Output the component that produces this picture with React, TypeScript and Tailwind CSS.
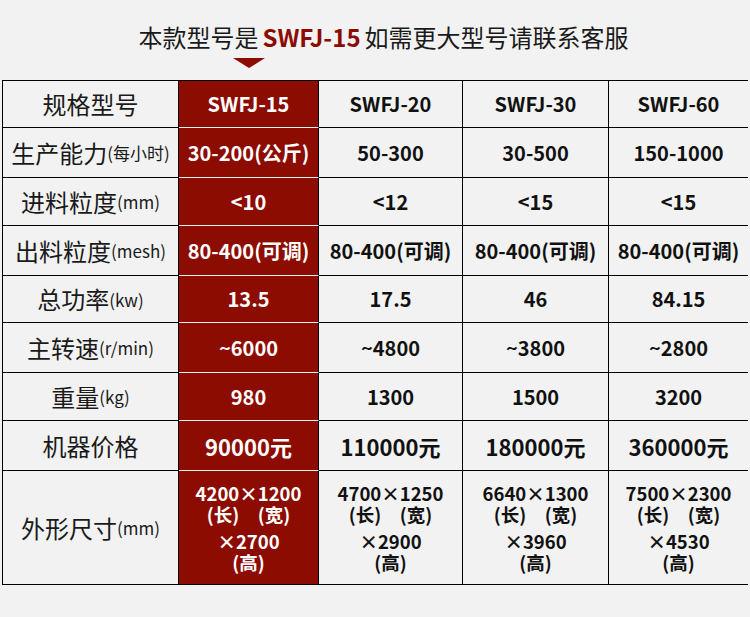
import React from "react";

const RED = "bg-[#8c0c02]";

type Row = {
  label: string;
  unit?: string;
  values: string[];
  h: string;
  kind?: "head" | "price" | "dim";
};

const rows: Row[] = [
  { label: "规格型号", values: ["SWFJ-15", "SWFJ-20", "SWFJ-30", "SWFJ-60"], h: "h-[47px]", kind: "head" },
  { label: "生产能力", unit: "(每小时)", values: ["30-200(公斤)", "50-300", "30-500", "150-1000"], h: "h-[50px]" },
  { label: "进料粒度", unit: "(mm)", values: ["<10", "<12", "<15", "<15"], h: "h-[48px]" },
  { label: "出料粒度", unit: "(mesh)", values: ["80-400(可调)", "80-400(可调)", "80-400(可调)", "80-400(可调)"], h: "h-[50px]" },
  { label: "总功率", unit: "(kw)", values: ["13.5", "17.5", "46", "84.15"], h: "h-[47px]" },
  { label: "主转速", unit: "(r/min)", values: ["~6000", "~4800", "~3800", "~2800"], h: "h-[50px]" },
  { label: "重量", unit: "(kg)", values: ["980", "1300", "1500", "3200"], h: "h-[48px]" },
  { label: "机器价格", values: ["90000元", "110000元", "180000元", "360000元"], h: "h-[50px]", kind: "price" },
  { label: "外形尺寸", unit: "(mm)", values: ["4200×1200|×2700", "4700×1250|×2900", "6640×1300|×3960", "7500×2300|×4530"], h: "h-[114px]", kind: "dim" },
];

function Value({ v, kind }: { v: string; kind?: Row["kind"] }) {
  if (kind === "dim") {
    const [a, b] = v.split("|");
    return (
      <div className="flex flex-col items-center gap-[6px] text-[18.5px] font-bold">
        <div className="flex flex-col items-center">
          <span className="h-[21px] leading-[21px]">{a}</span>
          <span className="h-[21px] leading-[21px]">(长)　(宽)</span>
        </div>
        <div className="flex flex-col items-center">
          <span className="h-[21px] leading-[21px]">{b}</span>
          <span className="h-[21px] leading-[21px]">(高)</span>
        </div>
      </div>
    );
  }
  return (
    <span className={kind === "price" ? "text-[22px] font-bold leading-none" : "text-[20px] font-bold leading-none"}>{v}</span>
  );
}

export default function App() {
  return (
    <div
      className="w-[750px] h-[617px] bg-[#f2f2f2] overflow-hidden"
      style={{ fontFamily: '"Noto Sans CJK SC", "Noto Sans", sans-serif' }}
    >
      <div className="pl-[17px] pt-[21px] text-center text-[24px] leading-[32px] text-[#1a1a1a]">
        本款型号是<span className="mx-[4px] font-bold text-[#8c0c02]">SWFJ-15</span>如需更大型号请联系客服
      </div>
      <div className="ml-[233px] mt-[5px] h-0 w-0 border-l-[16px] border-r-[16px] border-t-[10px] border-l-transparent border-r-transparent border-t-[#8c0c02]" />
      <div className="ml-[2px] mt-[12px] w-[746px] border-l border-t border-black grid grid-cols-[176px_140px_144px_146px_1fr]">
        {rows.map((r, ri) => {
          const last = ri === rows.length - 1;
          return (
            <React.Fragment key={r.label}>
              <div className={`${r.h} flex items-center justify-center border-r border-b border-black text-[#1a1a1a]`}>
                <span className="text-[24px] leading-none">{r.label}</span>
                {r.unit && <span className="text-[17px] leading-none">{r.unit}</span>}
              </div>
              {r.values.map((v, vi) => {
                const red = vi === 0;
                return (
                  <div
                    key={vi}
                    className={`${r.h} flex items-center justify-center border-b ${
                      vi === 3 ? "" : "border-r"
                    } border-r-black ${
                      red ? `${RED} text-white ${last ? "border-b-black" : "border-b-[#f2f2f2]"}` : "border-b-black text-[#111]"
                    }`}
                  >
                    <Value v={v} kind={r.kind} />
                  </div>
                );
              })}
            </React.Fragment>
          );
        })}
      </div>
    </div>
  );
}
